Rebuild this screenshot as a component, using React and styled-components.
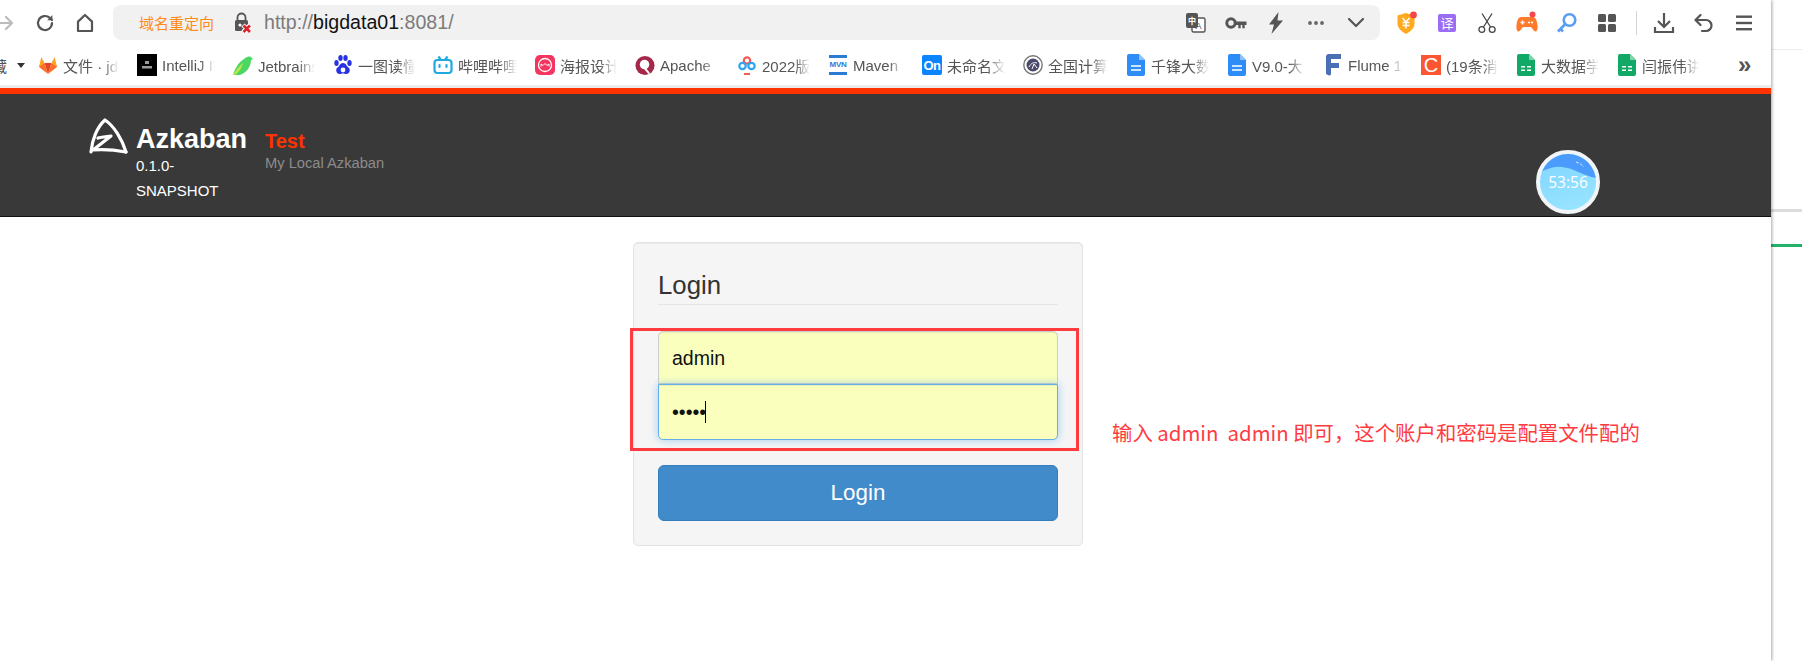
import React from 'react';
import styled, { createGlobalStyle } from 'styled-components';

const Global = createGlobalStyle`
  html, body { margin: 0; padding: 0; background: #fff; overflow: hidden; }
  * { box-sizing: border-box; }
  body { font-family: "Liberation Sans", "Noto Sans CJK SC", sans-serif; }
`;

const Page = styled.div`display: flex; width: 1802px; height: 661px; overflow: hidden; background: #fff;`;
const Main = styled.div`
  width: 1771px; height: 661px; flex: none; display: flex; flex-direction: column;
  box-shadow: 1px 0 3px rgba(0,0,0,.35); position: relative; z-index: 1; background: #fff; overflow: hidden;
`;
const Strip = styled.div`flex: 1; display: flex; flex-direction: column; padding-top: 49px;`;
const StripLine = styled.div`
  height: ${p => p.$h}px; margin-top: ${p => p.$top}px; background: ${p => p.$c};
`;

const Toolbar = styled.div`display: flex; align-items: center; height: 45px; flex: none;`;
const IconSlot = styled.div`
  width: 40px; height: 30px; flex: none; display: flex; align-items: center; justify-content: center;
  margin-left: ${p => p.$ml || 0}px;
`;
const Address = styled.div`
  width: 1267px; height: 35px; flex: none; margin-left: 8px; background: #f1f1f1; border-radius: 8px;
  display: flex; align-items: center; padding: 0 4px 0 26px;
`;
const Redirect = styled.span`font-size: 15px; color: #ff8a14; width: 74px; white-space: nowrap; font-family: "Noto Sans CJK SC", sans-serif;`;
const LockSlot = styled.div`width: 18px; height: 22px; margin-left: 21px; flex: none; display: flex;`;
const Url = styled.div`margin-left: 12px; font-size: 19.6px; color: #7b7b7b; white-space: nowrap;`;
const Host = styled.span`color: #111;`;
const AddressEnd = styled.div`margin-left: auto; display: flex; align-items: center;`;
const ExtGroup = styled.div`display: flex; align-items: center; margin-left: 7px;`;
const Separator = styled.div`width: 1px; height: 24px; background: #d4d4d4; margin: 0 7px 0 9px; flex: none;`;

const Bookmarks = styled.div`display: flex; align-items: center; height: 40px; flex: none; position: relative;`;
const FolderTail = styled.span`width: 23px; margin-left: -8px; font-size: 15px; color: #555; white-space: nowrap; flex: none; overflow: hidden; padding-right: 8px;`;
const Caret = styled.span`
  width: 0; height: 0; flex: none; border: 4px solid transparent; border-top: 5px solid #333; border-bottom: 0;
  margin: 0 13px 0 2px;
`;
const Bookmark = styled.div`
  width: ${p => p.$w}px; flex: none; display: flex; align-items: center; gap: 5px; padding-right: 18px;
`;
const BookmarkIcon = styled.div`width: 20px; height: 22px; flex: none; display: flex; align-items: center; justify-content: center;`;
const BookmarkText = styled.span`
  flex: 1; min-width: 0; overflow: hidden; white-space: nowrap; font-size: 15px; color: #555;
  -webkit-mask-image: linear-gradient(to right, #000 70%, transparent 100%);
  mask-image: linear-gradient(to right, #000 70%, transparent 100%);
`;
const OnTile = styled.div`
  width: 20px; height: 20px; background: #0a84ff; color: #fff; border-radius: 2px; font: bold 13px "Liberation Sans", sans-serif;
  display: flex; align-items: center; justify-content: center; letter-spacing: -.5px;
`;
const CTile = styled.div`
  width: 20px; height: 20px; background: #fc5531; color: #fff; font: 20px "Liberation Sans", sans-serif;
  display: flex; align-items: center; justify-content: center;
`;
const Chevrons = styled.span`margin-left: 21px; font-size: 24px; color: #555; line-height: 1; font-weight: bold;`;

const TopGap = styled.div`height: 3px; background: #ececec; flex: none;`;
const Header = styled.header`
  flex: none; height: 129px; background: #393939; border-top: 6px solid #ff3300; border-bottom: 1px solid #111;
  position: relative; display: flex; padding: 24px 0 0 88px;
`;
const LogoSlot = styled.div`width: 40px; height: 37px; flex: none; margin-right: 8px;`;
const Brand = styled.div`width: 129px; flex: none; color: #fff; padding-top: 8px;`;
const BrandName = styled.div`font-size: 27px; font-weight: bold; line-height: 27px;`;
const BrandVersion = styled.div`font-size: 15px; line-height: 25px; width: 96px;`;
const Env = styled.div`margin-top: 12px;`;
const EnvName = styled.div`font-size: 20px; font-weight: bold; color: #ff3300; line-height: 23px;`;
const EnvDesc = styled.div`font-size: 14.7px; color: #8c8c8c; line-height: 17px; margin-top: 2px;`;

const Timer = styled.div`
  position: absolute; left: 1536px; top: 56px; width: 64px; height: 64px; border-radius: 50%;
  border: 4px solid #f2f5f8; overflow: hidden; background: linear-gradient(160deg, #7fd4ff, #9ae6ff);
  display: flex; align-items: center; justify-content: center;
`;
const TimerWave = styled.svg`position: absolute; left: 0; top: 0; width: 100%; height: 100%;`;
const TimerText = styled.span`position: relative; color: #fff; font: 15.5px "Open Sans", sans-serif;`;

const Content = styled.main`flex: 1; display: flex; padding: 25px 0 0 633px; align-items: flex-start;`;
const Panel = styled.section`
  width: 450px; height: 304px; flex: none; background: #f5f5f5; border: 1px solid #e3e3e3; border-radius: 5px;
  padding: 24px; position: relative; box-shadow: inset 0 1px 1px rgba(0,0,0,.05);
`;
const Title = styled.h3`
  margin: 0 0 26px; font-size: 25.8px; font-weight: normal; color: #333; line-height: 36px; height: 38px;
  border-bottom: 1px solid #e5e5e5;
`;
const Field = styled.div`position: relative; height: ${p => p.$h}px;`;
const Input = styled.input`
  display: block; width: 100%; height: 100%; margin: 0; outline: 0; background: #faffbd; color: #111;
  font: 19.5px "Liberation Sans", sans-serif; padding: ${p => p.$focus ? '0' : '2px'} 13px 0; border: 1px solid ${p => p.$focus ? '#66afe9' : '#ccc'};
  border-radius: ${p => p.$focus ? '0 0 5px 5px' : '5px 5px 0 0'};
  box-shadow: ${p => p.$focus ? 'inset 0 1px 1px rgba(0,0,0,.075), 0 0 8px rgba(102,175,233,.6)' : 'inset 0 1px 1px rgba(0,0,0,.075)'};
  position: relative; z-index: ${p => p.$focus ? 1 : 0};
`;
const TextCaret = styled.span`position: absolute; z-index: 2; left: 47px; top: 17px; width: 1px; height: 22px; background: #000;`;
const Submit = styled.button`
  display: block; width: 400px; height: 56px; margin-top: 25px; background: #428bca; color: #fff;
  border: 1px solid #357ebd; border-radius: 6px; font: 22.4px "Liberation Sans", sans-serif; padding: 0;
`;
const Mark = styled.div`
  position: absolute; z-index: 3; left: -4px; top: 85px; width: 449px; height: 123px; border: 3px solid #ff3b3f;
`;
const Note = styled.p`
  margin: 176px 0 0 29px; font: 20.4px/28px "Noto Sans CJK SC", sans-serif; color: #ff3b3f; white-space: pre; font-weight: 400;
`;

const ic = { fill: 'none', stroke: '#555', strokeWidth: 2.2, strokeLinecap: 'round', strokeLinejoin: 'round' };

const Forward = () => <svg width="18" height="18" viewBox="0 0 18 18" {...ic} stroke="#bbb"><path d="M1 9h15M10 3l6 6-6 6" /></svg>;
const Reload = () => <svg width="20" height="20" viewBox="0 0 20 20" {...ic}><path d="M17 10a7 7 0 1 1-2.2-5.1L17 7" /><path d="M17.4 2v5.2h-5.2" fill="#555" stroke="none" /></svg>;
const Home = () => <svg width="20" height="20" viewBox="0 0 20 20" {...ic}><path d="M3 18V8.6L10 2l7 6.6V18z" /></svg>;
const Lock = () => (
  <svg width="18" height="22" viewBox="0 0 18 22">
    <path d="M3.5 8V5.5a4 4 0 0 1 8 0V8" fill="none" stroke="#555" strokeWidth="1.8" />
    <rect x="1" y="8" width="13" height="11" rx="1.5" fill="#555" />
    <circle cx="6" cy="13" r="1.6" fill="#fff" />
    <path d="M9 13l7 7m0-7l-7 7" stroke="#fff" strokeWidth="4.5" />
    <path d="M9.5 13.5l6.5 6.5m0-6.5L9.5 20" stroke="#d8232a" strokeWidth="2.6" />
  </svg>
);
const Translate = () => (
  <svg width="22" height="22" viewBox="0 0 22 22">
    <rect x="7" y="6" width="13" height="14" rx="1.5" fill="#fff" stroke="#555" strokeWidth="1.4" />
    <text x="13.5" y="17" fontSize="9" textAnchor="middle" fill="#555" fontFamily="Liberation Sans">A</text>
    <rect x="1" y="1" width="12" height="15" rx="2" fill="#555" />
    <text x="7" y="12" fontSize="8" textAnchor="middle" fill="#fff" fontFamily="Noto Sans CJK SC" fontWeight="bold">中</text>
  </svg>
);
const Key = () => (
  <svg width="22" height="14" viewBox="0 0 22 14">
    <circle cx="6" cy="7" r="4.2" fill="none" stroke="#555" strokeWidth="3" />
    <path d="M10 5.5h11.5V9h-1.8v3.2h-2.4V9h-1.6v3.2h-2.4V9H10z" fill="#555" />
  </svg>
);
const Bolt = () => <svg width="16" height="22" viewBox="0 0 16 22"><path d="M10.5 0 1 12.5h5L3.5 22 15 8.5H9.5z" fill="#555" /></svg>;
const Dots = () => <svg width="18" height="6" viewBox="0 0 18 6" fill="#666"><circle cx="3" cy="3" r="1.9" /><circle cx="9" cy="3" r="1.9" /><circle cx="15" cy="3" r="1.9" /></svg>;
const Down = () => <svg width="18" height="12" viewBox="0 0 18 12" {...ic}><path d="M2 2l7 7 7-7" /></svg>;
const Shield = () => (
  <svg width="22" height="24" viewBox="0 0 22 24">
    <path d="M1.5 4.5 10 2l8.5 2.5v8c0 4.8-4 8-8.5 10.5C5.500 20.500 1.500 17.300 1.500 12.500z" fill="#ffa91f" />
    <path d="M6.500 7l3.500 4 3.500-4M10 11v6.500M6.500 11.500h7M6.500 14.500h7" stroke="#fff" strokeWidth="1.500" fill="none" />
    <circle cx="17.500" cy="4" r="3.400" fill="#f4474c" />
  </svg>
);
const YiTile = styled.div`
  width: 18px; height: 18px; background: #9b6cf5; color: #fff; border-radius: 2px; font: 13px "Noto Sans CJK SC", sans-serif;
  display: flex; align-items: center; justify-content: center;
`;
const Scissors = () => (
  <svg width="18" height="22" viewBox="0 0 18 22" fill="none" stroke="#444" strokeWidth="1.300">
    <circle cx="3.800" cy="17.500" r="2.900" /><circle cx="14.200" cy="17.500" r="2.900" />
    <path d="M5.500 15 14 1.500M12.500 15 4 1.500" />
  </svg>
);
const Game = () => (
  <svg width="24" height="24" viewBox="0 0 24 24">
    <path d="M6 6h12c2.800 0 4 4 4.500 8 .5 4-.5 6.500-2 6.500-2 0-3-4-5-4.500H8.500c-2 .5-3 4.500-5 4.500-1.500 0-2.500-2.500-2-6.500C2 10 3.200 6 6 6z" fill="#ff7a2b" />
    <path d="M5.500 11.500h4M7.500 9.500v4" stroke="#fff" strokeWidth="1.300" />
    <circle cx="14" cy="11.500" r="1.100" fill="#fff" /><circle cx="17" cy="11.500" r="1.100" fill="#fff" />
    <circle cx="17.500" cy="3.500" r="3" fill="#f4474c" />
  </svg>
);
const BlueKey = () => (
  <svg width="22" height="22" viewBox="0 0 22 22" fill="none" stroke="#5b9cf5" strokeWidth="2.600">
    <circle cx="13.500" cy="8" r="5.800" />
    <path d="M9.300 12 2 19.500M4.500 17l2.500 2.500" />
  </svg>
);
const Grid = () => (
  <svg width="18" height="18" viewBox="0 0 18 18" fill="#555">
    <rect width="8" height="8" rx="1.500" /><rect x="10" width="8" height="8" rx="1.500" />
    <rect y="10" width="8" height="8" rx="1.500" /><rect x="10" y="10" width="8" height="8" rx="1.500" />
  </svg>
);
const Download = () => <svg width="22" height="22" viewBox="0 0 22 22" {...ic} strokeLinecap="butt" strokeLinejoin="miter"><path d="M11 1v13M5 9l6 6 6-6M2 15v5h18v-5" /></svg>;
const Undo = () => <svg width="20" height="20" viewBox="0 0 20 20" {...ic}><path d="M2 7h10a5.500 5.500 0 0 1 0 11H8" /><path d="M6.500 2 1.500 7l5 5" /></svg>;
const Menu = () => <svg width="18" height="16" viewBox="0 0 18 16" fill="#555"><rect width="16" height="2.400" x="1" y="0.500" /><rect width="16" height="2.400" x="1" y="6.800" /><rect width="16" height="2.400" x="1" y="13" /></svg>;

const GitLab = () => (
  <svg width="20" height="20" viewBox="0 0 20 20">
    <path d="M10 19 6.500 8h7z" fill="#e24329" /><path d="M10 19 1 12l1-2.500L6.500 8z" fill="#fc6d26" /><path d="M10 19l9-7-1-2.500L13.500 8z" fill="#fc6d26" />
    <path d="M1 12 3.300 2l3.200 6z" fill="#fca326" /><path d="M19 12 16.700 2l-3.200 6z" fill="#fca326" />
  </svg>
);
const IdeaTile = () => (
  <svg width="20" height="22" viewBox="0 0 20 22"><rect width="20" height="22" fill="#000" /><rect x="8" y="7" width="4" height="3" fill="#999" /><rect x="5" y="12" width="10" height="2.500" fill="#999" /></svg>
);
const JetBird = () => (
  <svg width="20" height="22" viewBox="0 0 20 22">
    <path d="M0 21C2 14 6 8 11 5c2-2 5-3 7-2l2 2-2 1c0 7-5 13-11 15z" fill="#4cd763" /><path d="M0 21c3-5 6-9 10-12-1 5-4 9-8 12z" fill="#b9e64a" />
  </svg>
);
const Baidu = () => (
  <svg width="20" height="22" viewBox="0 0 20 22" fill="#2932e1">
    <ellipse cx="3.500" cy="9" rx="2.200" ry="3" /><ellipse cx="7.500" cy="4" rx="2.200" ry="3" /><ellipse cx="12.500" cy="4" rx="2.200" ry="3" /><ellipse cx="16.500" cy="9" rx="2.200" ry="3" />
    <path d="M10 9c3 0 3.500 3 5.500 4.500 2.500 2 1 6.500-2 6.500-1.500 0-2-.5-3.500-.5s-2 .5-3.500.5c-3 0-4.500-4.500-2-6.500C6.500 12 7 9 10 9z" />
    <circle cx="10" cy="16" r="2.400" fill="#fff" />
  </svg>
);
const Bili = () => (
  <svg width="20" height="20" viewBox="0 0 20 20" fill="none" stroke="#20a9e0" strokeWidth="2.200">
    <rect x="1.500" y="5" width="17" height="13" rx="3" /><path d="M5.500 1.500 8 5M14.500 1.500 12 5" />
    <path d="M6.500 10v2M13.500 10v2" strokeLinecap="round" />
  </svg>
);
const Poster = () => (
  <svg width="20" height="20" viewBox="0 0 20 20">
    <rect width="20" height="20" rx="5" fill="#f43560" /><circle cx="10" cy="10" r="6.500" fill="none" stroke="#fff" strokeWidth="1.300" />
    <path d="M6 11.500V9l2 1.500L10 8.500l2 2 2-1.500v2.500" fill="none" stroke="#fff" strokeWidth="1" />
  </svg>
);
const ApacheIcon = () => (
  <svg width="21" height="21" viewBox="0 0 21 21">
    <circle cx="10.500" cy="10.500" r="10" fill="#a5284a" /><circle cx="10" cy="9.500" r="5" fill="#fff" />
    <path d="M9 12l6 7" stroke="#fff" strokeWidth="2" />
  </svg>
);
const Cloud2022 = () => (
  <svg width="20" height="22" viewBox="0 0 20 22" fill="none" strokeWidth="2.200">
    <circle cx="10" cy="6.500" r="3.200" stroke="#f25c54" /><circle cx="5.500" cy="12" r="3.200" stroke="#2aa4f4" /><circle cx="14.500" cy="12" r="3.200" stroke="#2aa4f4" />
    <rect x="7" y="19" width="6" height="2" fill="#f25c54" stroke="none" />
  </svg>
);
const Mvn = styled.div`
  width: 18px; height: 20px; border-top: 3px solid #2a7bd3; border-bottom: 3px solid #2a7bd3; color: #2a7bd3;
  font: bold 8px/14px "Liberation Sans", sans-serif; text-align: center; letter-spacing: -.3px;
`;
const Seal = () => (
  <svg width="20" height="20" viewBox="0 0 20 20" fill="none">
    <circle cx="10" cy="10" r="9.200" stroke="#777" strokeWidth="1.400" /><circle cx="10" cy="10" r="6.500" fill="#4a4a6a" /><path d="M6 12c2-4 5-5 8-4M9 14l2-5 3 4" stroke="#fff" strokeWidth="1" />
  </svg>
);
const Doc = () => (
  <svg width="18" height="22" viewBox="0 0 18 22">
    <path d="M2 0h10l6 6v14a2 2 0 0 1-2 2H2a2 2 0 0 1-2-2V2a2 2 0 0 1 2-2z" fill="#2e8cf6" /><path d="M12 0l6 6h-6z" fill="#8cc2fb" />
    <path d="M4 12h10M4 16h10" stroke="#fff" strokeWidth="1.500" />
  </svg>
);
const Flume = () => <svg width="16" height="22" viewBox="0 0 16 22"><path d="M1 3a3 3 0 0 1 3-3h12v5H6v4h8v5H6v6a2 2 0 0 1-2 1.500L1 20z" fill="#4a6fb5" /></svg>;
const Sheet = () => (
  <svg width="18" height="22" viewBox="0 0 18 22">
    <path d="M2 0h10l6 6v14a2 2 0 0 1-2 2H2a2 2 0 0 1-2-2V2a2 2 0 0 1 2-2z" fill="#12a866" /><path d="M12 0l6 6h-6z" fill="#7fd3ab" />
    <path d="M4 12h4v1.600H4zM10 12h4v1.600h-4zM4 15.500h4v1.600H4zM10 15.500h4v1.600h-4z" fill="#fff" />
  </svg>
);

const marks = [
  [99, <GitLab />, '文件 · jdk-8u'],
  [96, <IdeaTile />, 'IntelliJ IDEA'],
  [100, <JetBird />, 'Jetbrains 激活'],
  [100, <Baidu />, '一图读懂'],
  [102, <Bili />, '哔哩哔哩'],
  [100, <Poster />, '海报设计'],
  [102, <ApacheIcon />, 'Apache'],
  [91, <Cloud2022 />, '2022版'],
  [94, <Mvn>MVN</Mvn>, 'Maven'],
  [101, <OnTile>On</OnTile>, '未命名文'],
  [103, <Seal />, '全国计算'],
  [101, <Doc />, '千锋大数'],
  [96, <Doc />, 'V9.0-大数'],
  [98, <Flume />, 'Flume 1.9'],
  [95, <CTile>C</CTile>, '(19条消息'],
  [101, <Sheet />, '大数据学'],
  [100, <Sheet />, '闫振伟讲'],
];

export default function App() {
  return (
    <>
      <Global />
      <Page>
        <Main>
          <Toolbar>
            <IconSlot $ml={-15}><Forward /></IconSlot>
            <IconSlot><Reload /></IconSlot>
            <IconSlot><Home /></IconSlot>
            <Address>
              <Redirect>域名重定向</Redirect>
              <LockSlot><Lock /></LockSlot>
              <Url>http://<Host>bigdata01</Host>:8081/</Url>
              <AddressEnd>
                <IconSlot><Translate /></IconSlot>
                <IconSlot><Key /></IconSlot>
                <IconSlot><Bolt /></IconSlot>
                <IconSlot><Dots /></IconSlot>
                <IconSlot><Down /></IconSlot>
              </AddressEnd>
            </Address>
            <ExtGroup>
              <IconSlot><Shield /></IconSlot>
              <IconSlot><YiTile>译</YiTile></IconSlot>
              <IconSlot><Scissors /></IconSlot>
              <IconSlot><Game /></IconSlot>
              <IconSlot><BlueKey /></IconSlot>
              <IconSlot><Grid /></IconSlot>
              <Separator />
              <IconSlot><Download /></IconSlot>
              <IconSlot><Undo /></IconSlot>
              <IconSlot><Menu /></IconSlot>
            </ExtGroup>
          </Toolbar>
          <Bookmarks>
            <FolderTail>藏</FolderTail>
            <Caret />
            {marks.map(([w, icon, label]) => (
              <Bookmark key={label} $w={w}>
                <BookmarkIcon>{icon}</BookmarkIcon>
                <BookmarkText>{label}</BookmarkText>
              </Bookmark>
            ))}
            <Chevrons>»</Chevrons>
          </Bookmarks>
          <TopGap />
          <Header>
            <LogoSlot>
              <svg width="40" height="37" viewBox="0 0 40 37" fill="none" stroke="#fff" strokeWidth="3.200" strokeLinecap="round" strokeLinejoin="round">
                <path d="M3 34C4 22 9 9 17 2c9 6 17 19 21 32" />
                <path d="M10 20c4-1 8-1.500 13-2L5 32c10-1 22 0 33 2" />
              </svg>
            </LogoSlot>
            <Brand>
              <BrandName>Azkaban</BrandName>
              <BrandVersion>0.1.0-SNAPSHOT</BrandVersion>
            </Brand>
            <Env>
              <EnvName>Test</EnvName>
              <EnvDesc>My Local Azkaban</EnvDesc>
            </Env>
            <Timer>
              <TimerWave viewBox="0 0 56 56">
                <path d="M0 0h56v24C44 22 34 14 22 13 12 12 6 16 0 18z" fill="#4a9bfb" />
                <path d="M36 8c3 1 5 2 8 5" stroke="#dbeeff" strokeWidth="1" strokeDasharray="3 1.500" fill="none" />
              </TimerWave>
              <TimerText>53:56</TimerText>
            </Timer>
          </Header>
          <Content>
            <Panel>
              <Title>Login</Title>
              <Field $h={53}><Input value="admin" readOnly /></Field>
              <Field $h={56}>
                <Input $focus type="password" value="admin" readOnly />
                <TextCaret />
              </Field>
              <Submit>Login</Submit>
              <Mark />
            </Panel>
            <Note>输入 admin  admin 即可，这个账户和密码是配置文件配的</Note>
          </Content>
        </Main>
        <Strip>
          <StripLine $h={1} $top={0} $c="#ececec" />
          <StripLine $h={3} $top={159} $c="#dcdcdc" />
          <StripLine $h={3} $top={32} $c="#22b26a" />
        </Strip>
      </Page>
    </>
  );
}
